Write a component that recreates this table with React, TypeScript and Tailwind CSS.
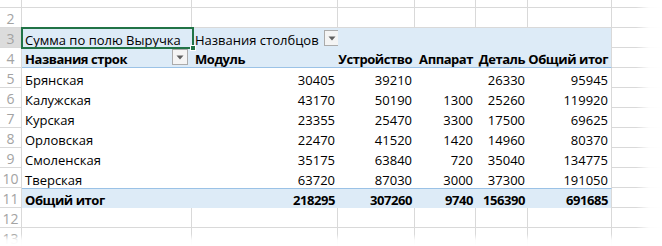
import React from 'react';

type Cell = { text?: string; align?: 'l' | 'r'; drop?: boolean };

const cols = 'grid grid-cols-[22px_170px_146px_77px_61px_52px_84px_1fr]';

const grid = 'border-r border-b border-[#d9d9d9]';

const data: [string, string, string, string, string, string][] = [
  ['Брянская', '30405', '39210', '', '26330', '95945'],
  ['Калужская', '43170', '50190', '1300', '25260', '119920'],
  ['Курская', '23355', '25470', '3300', '17500', '69625'],
  ['Орловская', '22470', '41520', '1420', '14960', '80370'],
  ['Смоленская', '35175', '63840', '720', '35040', '134775'],
  ['Тверская', '63720', '87030', '3000', '37300', '191050'],
];

const Drop = () => (
  <span className="ml-auto mr-[1px] mb-[1px] flex h-4 w-4 shrink-0 items-center justify-center border border-[#ababab] bg-[#f4f4f4]">
    <svg width="8" height="5" viewBox="0 0 8 5">
      <path d="M0.5 0.5 L7.5 0.5 L4 4.5 Z" fill="#5f5f5f" />
    </svg>
  </span>
);

const RowHead = ({ n, h = 'h-5', sel = false }: { n?: number; h?: string; sel?: boolean }) => (
  <div
    className={`${h} ${grid} flex items-end justify-center pb-[1px] text-[14px] leading-none text-[#a3a3a3] ${
      sel ? 'bg-[#dcdcdc] text-[#8a8a8a]' : 'bg-white'
    }`}
  >
    {n}
  </div>
);

const EmptyRow = ({ n, h = 'h-5' }: { n?: number; h?: string }) => (
  <div className={cols}>
    <RowHead n={n} h={h} />
    {[0, 1, 2, 3, 4, 5, 6].map((i) => (
      <div key={i} className={`${h} ${grid}`} />
    ))}
  </div>
);

const PivotRow = ({
  n,
  cells,
  bold = false,
  blue = false,
  top = false,
  bottom = false,
}: {
  n: number;
  cells: Cell[];
  bold?: boolean;
  blue?: boolean;
  top?: boolean;
  bottom?: boolean;
}) => (
  <div className={cols}>
    <RowHead n={n} />
    {cells.map((c, i) => (
      <div
        key={i}
        className={`flex h-5 items-end px-[3px] pb-[1px] leading-none ${blue ? 'bg-[#ddebf7]' : 'bg-white'} ${
          bold ? 'font-bold tracking-[-0.45px]' : ''
        } ${top ? 'border-t border-[#9bc2e6]' : ''} ${bottom ? 'border-b border-[#9bc2e6]' : ''} ${
          c.align === 'r' ? 'justify-end' : 'justify-start'
        } ${i === 5 ? 'border-r border-r-[#d9d9d9]' : ''}`}
      >
        <span className="whitespace-nowrap">{c.text}</span>
        {c.drop && <Drop />}
      </div>
    ))}
    <div className={`h-5 ${grid}`} />
  </div>
);

export default function App() {
  return (
    <div
      className="relative h-[246px] w-[662px] overflow-hidden bg-white text-[13px] text-black"
      style={{ fontFamily: '"Open Sans", "Noto Sans", sans-serif' }}
    >
      <EmptyRow h="h-2" />
      <EmptyRow n={2} />

      {/* row 3: pivot caption */}
      <div className={cols}>
        <RowHead n={3} sel />
        <div className="relative flex h-5 items-end bg-[#ddebf7] px-[3px] pb-[1px] leading-none">
          <span className="whitespace-nowrap">Сумма по полю Выручка</span>
          <div className="pointer-events-none absolute inset-[-1px_-2px_-1px_-1px] border-2 border-[#217346]" />
          <div className="absolute -bottom-[3px] -right-[4px] h-[6px] w-[6px] border border-white bg-[#217346]" />
        </div>
        <div className="flex h-5 items-end bg-[#ddebf7] pl-[3px] pr-0 pb-0 leading-none">
          <span className="whitespace-nowrap pb-[1px]">Названия столбцов</span>
          <span className="ml-[5px] mb-[2px] flex h-4 w-4 shrink-0 items-center justify-center border border-[#ababab] bg-[#f4f4f4]">
            <svg width="8" height="5" viewBox="0 0 8 5">
              <path d="M0.5 0.5 L7.5 0.5 L4 4.5 Z" fill="#5f5f5f" />
            </svg>
          </span>
        </div>
        <div className="h-5 bg-[#ddebf7]" />
        <div className="h-5 bg-[#ddebf7]" />
        <div className="h-5 bg-[#ddebf7]" />
        <div className="h-5 border-r border-[#d9d9d9] bg-[#ddebf7]" />
        <div className={`h-5 ${grid}`} />
      </div>

      <PivotRow
        n={4}
        blue
        bold
        bottom
        cells={[
          { text: 'Названия строк', drop: true },
          { text: 'Модуль' },
          { text: 'Устройство', align: 'r' },
          { text: 'Аппарат', align: 'r' },
          { text: 'Деталь', align: 'r' },
          { text: 'Общий итог', align: 'r' },
        ]}
      />

      {data.map((r, i) => (
        <PivotRow
          key={r[0]}
          n={5 + i}
          cells={[
            { text: r[0] },
            { text: r[1], align: 'r' },
            { text: r[2], align: 'r' },
            { text: r[3], align: 'r' },
            { text: r[4], align: 'r' },
            { text: r[5], align: 'r' },
          ]}
        />
      ))}

      <PivotRow
        n={11}
        blue
        bold
        top
        cells={[
          { text: 'Общий итог' },
          { text: '218295', align: 'r' },
          { text: '307260', align: 'r' },
          { text: '9740', align: 'r' },
          { text: '156390', align: 'r' },
          { text: '691685', align: 'r' },
        ]}
      />

      <EmptyRow n={12} />
      <EmptyRow n={13} />

      {/* torn paper fade on the right and bottom edges */}
      <div className="pointer-events-none absolute inset-y-0 right-0 w-[26px] bg-gradient-to-r from-white/0 via-white/90 to-white" />
      <div className="pointer-events-none absolute inset-x-0 bottom-0 h-[12px] bg-gradient-to-b from-white/0 via-white/90 to-white" />
    </div>
  );
}
